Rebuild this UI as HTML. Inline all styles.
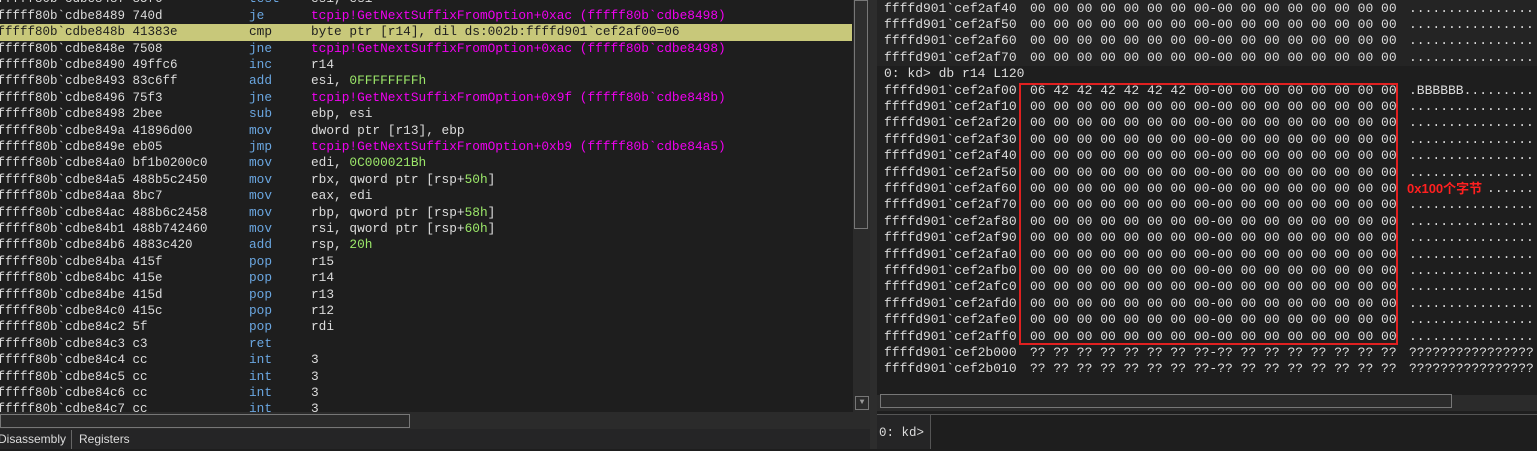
<!DOCTYPE html>
<html><head><style>
body{margin:0;width:1537px;height:449px;background:#1e1e1e;overflow:hidden;position:relative;font-family:"Liberation Mono",monospace;font-size:12.5px;color:#dcdcdc}
.r{position:absolute;height:16.4px;line-height:16.4px;white-space:pre}
#R .r{font-size:13px}
.o{font-size:12.8px}
.m{color:#6aa6e0}.p{color:#f000f0}.g{color:#9ce86a}
.hl{background:#c8c87a;color:#1e1e1e}
</style></head><body>
<div style="position:absolute;left:0;top:0;width:852px;height:412px;overflow:hidden" id="L"></div>
<div style="position:absolute;left:853px;top:0;width:17px;height:412px;background:#2b2b2b"></div>
<div style="position:absolute;left:854px;top:0;width:14px;height:229px;border:1px solid #777;box-sizing:border-box;background:#2e2e2e"></div>
<div style="position:absolute;left:855px;top:396px;width:14px;height:14px;border:1px solid #777;box-sizing:border-box;color:#999;font-size:8px;text-align:center;line-height:12px">▼</div>
<div style="position:absolute;left:0;top:412px;width:870px;height:17px;background:#2b2b2b"></div>
<div style="position:absolute;left:0;top:414px;width:410px;height:14px;border:1px solid #777;box-sizing:border-box"></div>
<div style="position:absolute;left:0;top:429px;width:870px;height:20px;background:#252526;font-family:'Liberation Sans',sans-serif;font-size:12px;line-height:20px"><span style="position:absolute;left:-2px">Disassembly</span><span style="position:absolute;left:71px;top:1px;width:1px;height:19px;background:#666"></span><span style="position:absolute;left:79px">Registers</span></div>
<div style="position:absolute;left:870px;top:0;width:7px;height:449px;background:#2d2d2d"></div>
<div style="position:absolute;left:877px;top:0;width:660px;height:66px;background:#242424"></div>
<div id="R" style="position:absolute;left:877px;top:0;width:660px;height:395px;overflow:hidden"></div>
<div style="position:absolute;left:1019px;top:83px;width:379px;height:262px;border:2px solid #e02020;box-sizing:border-box"></div>
<div style="position:absolute;left:1405px;top:178px;padding:0 2px;background:#1e1e1e;color:#ff2020;font-family:'Liberation Sans','Noto Sans CJK SC',sans-serif;font-size:13px;font-weight:bold">0x100个字节</div>
<div style="position:absolute;left:877px;top:395px;width:660px;height:16px;background:#2b2b2b"></div>
<div style="position:absolute;left:880px;top:394px;width:572px;height:14px;border:1px solid #777;box-sizing:border-box"></div>
<div style="position:absolute;left:877px;top:414px;width:660px;height:1px;background:#555"></div>
<div style="position:absolute;left:877px;top:415px;width:51px;height:34px;background:#252526;border-right:1px solid #555;line-height:36px;padding-left:2px;font-size:12.5px">0: kd&gt;</div>
<script>
var L=[["fffff80b`cdbe8487 85f6","test","esi, esi"],
["fffff80b`cdbe8489 740d","je","<span class=p>tcpip!GetNextSuffixFromOption+0xac (fffff80b`cdbe8498)</span>"],
["fffff80b`cdbe848b 41383e","cmp","byte ptr [r14], dil ds:002b:ffffd901`cef2af00=06",1],
["fffff80b`cdbe848e 7508","jne","<span class=p>tcpip!GetNextSuffixFromOption+0xac (fffff80b`cdbe8498)</span>"],
["fffff80b`cdbe8490 49ffc6","inc","r14"],
["fffff80b`cdbe8493 83c6ff","add","esi, <span class=g>0FFFFFFFFh</span>"],
["fffff80b`cdbe8496 75f3","jne","<span class=p>tcpip!GetNextSuffixFromOption+0x9f (fffff80b`cdbe848b)</span>"],
["fffff80b`cdbe8498 2bee","sub","ebp, esi"],
["fffff80b`cdbe849a 41896d00","mov","dword ptr [r13], ebp"],
["fffff80b`cdbe849e eb05","jmp","<span class=p>tcpip!GetNextSuffixFromOption+0xb9 (fffff80b`cdbe84a5)</span>"],
["fffff80b`cdbe84a0 bf1b0200c0","mov","edi, <span class=g>0C000021Bh</span>"],
["fffff80b`cdbe84a5 488b5c2450","mov","rbx, qword ptr [rsp+<span class=g>50h</span>]"],
["fffff80b`cdbe84aa 8bc7","mov","eax, edi"],
["fffff80b`cdbe84ac 488b6c2458","mov","rbp, qword ptr [rsp+<span class=g>58h</span>]"],
["fffff80b`cdbe84b1 488b742460","mov","rsi, qword ptr [rsp+<span class=g>60h</span>]"],
["fffff80b`cdbe84b6 4883c420","add","rsp, <span class=g>20h</span>"],
["fffff80b`cdbe84ba 415f","pop","r15"],["fffff80b`cdbe84bc 415e","pop","r14"],["fffff80b`cdbe84be 415d","pop","r13"],["fffff80b`cdbe84c0 415c","pop","r12"],["fffff80b`cdbe84c2 5f","pop","rdi"],["fffff80b`cdbe84c3 c3","ret",""],["fffff80b`cdbe84c4 cc","int","3"],["fffff80b`cdbe84c5 cc","int","3"],["fffff80b`cdbe84c6 cc","int","3"],["fffff80b`cdbe84c7 cc","int","3"]];
var h="";L.forEach(function(l,i){var t=-8.6+i*16.4;h+='<div class="r'+(l[3]?' hl':'')+'" style="top:'+t+'px;left:0;width:852px"><span style="position:absolute;left:-2.5px">'+l[0]+'</span><span class="o '+(l[3]?'':'m')+'" style="position:absolute;left:249px">'+l[1]+'</span><span class="o" style="position:absolute;left:311px">'+l[2]+'</span></div>';});
document.getElementById('L').innerHTML=h;
var z="00 00 00 00 00 00 00 00-00 00 00 00 00 00 00 00",d="................",q="?? ?? ?? ?? ?? ?? ?? ??-?? ?? ?? ?? ?? ?? ?? ??";
var R=[["ffffd901`cef2af40",z,d],["ffffd901`cef2af50",z,d],["ffffd901`cef2af60",z,d],["ffffd901`cef2af70",z,d],["0: kd> db r14 L120"],["ffffd901`cef2af00","06 42 42 42 42 42 42 00-00 00 00 00 00 00 00 00",".BBBBBB........."]];
"10 20 30 40 50 60 70 80 90 a0 b0 c0 d0 e0 f0".split(" ").forEach(function(s){R.push(["ffffd901`cef2af"+s,z,d]);});
R.push(["ffffd901`cef2b000",q,"????????????????"],["ffffd901`cef2b010",q,"????????????????"]);
h="";R.forEach(function(l,i){var t=0.6+i*16.4;h+='<div class="r" style="top:'+t+'px;left:7px"><span>'+l[0]+'</span>'+(l[1]?'<span style="position:absolute;left:146px">'+l[1]+'</span><span style="position:absolute;left:525px">'+l[2]+'</span>':'')+'</div>';});
document.getElementById('R').innerHTML=h;
</script>
</body></html>
